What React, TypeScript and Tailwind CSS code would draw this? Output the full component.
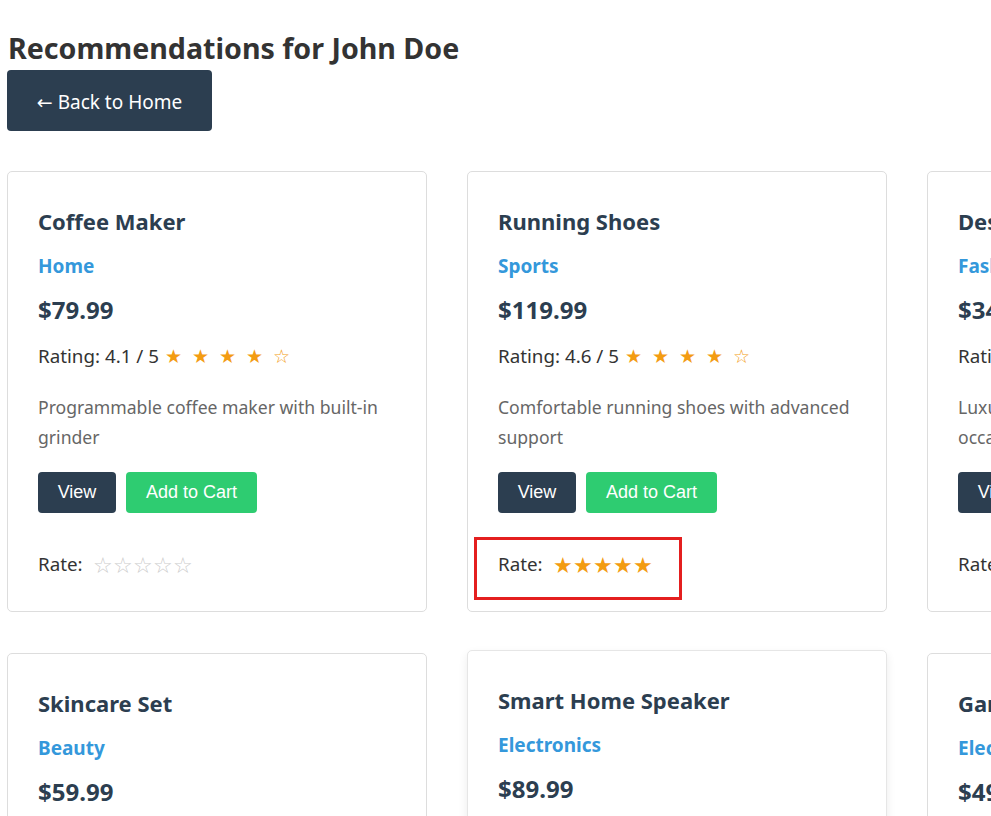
const products = [
  {
    name: "Coffee Maker",
    category: "Home",
    price: "$79.99",
    rating: "4.1",
    description: "Programmable coffee maker with built-in grinder",
    rated: 0,
  },
  {
    name: "Running Shoes",
    category: "Sports",
    price: "$119.99",
    rating: "4.6",
    description: "Comfortable running shoes with advanced support",
    rated: 5,
    marked: true,
  },
  {
    name: "Designer Handbag",
    category: "Fashion",
    price: "$349.99",
    rating: "4.7",
    description: "Luxury leather handbag for special occasions",
    rated: 0,
  },
  {
    name: "Skincare Set",
    category: "Beauty",
    price: "$59.99",
    rating: "4.3",
    description: "Complete skincare routine for healthy glowing skin",
    rated: 0,
  },
  {
    name: "Smart Home Speaker",
    category: "Electronics",
    price: "$89.99",
    rating: "4.4",
    description: "Voice-controlled speaker with smart home integration",
    rated: 0,
    hovered: true,
  },
  {
    name: "Gaming Mouse",
    category: "Electronics",
    price: "$49.99",
    rating: "4.5",
    description: "High precision gaming mouse with RGB lighting",
    rated: 0,
  },
];

type Product = (typeof products)[number] & { marked?: boolean; hovered?: boolean };

function ProductCard({ p }: { p: Product }) {
  return (
    <div
      className={
        p.hovered
          ? "w-[420px] shrink-0 -translate-y-[3px] rounded-[5px] border border-[#e6e6e6] bg-white px-[30px] pt-[34px] pb-[17px] shadow-[0_4px_10px_rgba(0,0,0,0.08)]"
          : "w-[420px] shrink-0 rounded-[5px] border border-[#dddddd] bg-white px-[30px] pt-[34px] pb-[17px]"
      }
    >
      <h3 className="text-[22px] leading-[30px] font-bold text-[#2c3e50]">{p.name}</h3>
      <p className="mt-[17px] text-[19px] leading-[26px] font-bold text-[#3498db]">{p.category}</p>
      <p className="mt-[16px] text-[24px] leading-[30px] font-bold text-[#2c3e50]">{p.price}</p>
      <p className="mt-[18px] flex items-center text-[18.8px] leading-[26px] text-[#333333]">
        <span>Rating: {p.rating} / 5</span>
        <span className="ml-[1px] flex text-[19px] text-[#f39c12]">
          {["★", "★", "★", "★", "☆"].map((s, i) => (
            <span key={i} className="w-[27px] text-center">
              {s}
            </span>
          ))}
        </span>
      </p>
      <p className="mt-[23px] text-[17.6px] leading-[30px] text-[#666666]">{p.description}</p>
      <div className="mt-[20px] flex gap-[10px] font-['Liberation_Sans',Arial,sans-serif]">
        <button className="h-[41px] w-[78px] rounded-[4px] bg-[#2c3e50] text-[18px] text-white">View</button>
        <button className="h-[41px] w-[131px] rounded-[4px] bg-[#2ecc71] text-[18px] text-white">
          Add to Cart
        </button>
      </div>
      <div className="relative mt-[21px] flex h-[60px] items-center">
        {p.marked && (
          <div className="pointer-events-none absolute top-[3px] left-[-24px] h-[63px] w-[208px] border-[3px] border-[#e41f1f]" />
        )}
        <span className="text-[18.8px] text-[#333333]">Rate:</span>
        <span className="ml-[10px] flex text-[22px] leading-none">
          {[0, 1, 2, 3, 4].map((i) => (
            <span key={i} className={i < p.rated ? "text-[#f39c12]" : "text-[#cccccc]"}>
              {i < p.rated ? "★" : "☆"}
            </span>
          ))}
        </span>
      </div>
    </div>
  );
}

export default function App() {
  return (
    <div className="h-[816px] overflow-hidden bg-white px-[7px] py-[8px] font-['Noto_Sans',sans-serif] text-[#333333]">
      <h1 className="mt-[20px] ml-[1px] text-[28.6px] leading-[40px] font-bold text-[#333333]">
        Recommendations for John Doe
      </h1>
      <button className="mt-[2px] h-[61px] w-[205px] rounded-[4px] bg-[#2c3e50] pt-[3px] text-[19px] text-white">
        <span className="font-['DejaVu_Sans',sans-serif]">←</span> Back to Home
      </button>
      <div className="mt-[40px] flex w-[1400px] flex-col gap-[41px]">
        <div className="flex gap-[40px]">
          {products.slice(0, 3).map((p) => (
            <ProductCard key={p.name} p={p} />
          ))}
        </div>
        <div className="flex gap-[40px]">
          {products.slice(3, 6).map((p) => (
            <ProductCard key={p.name} p={p} />
          ))}
        </div>
      </div>
    </div>
  );
}
